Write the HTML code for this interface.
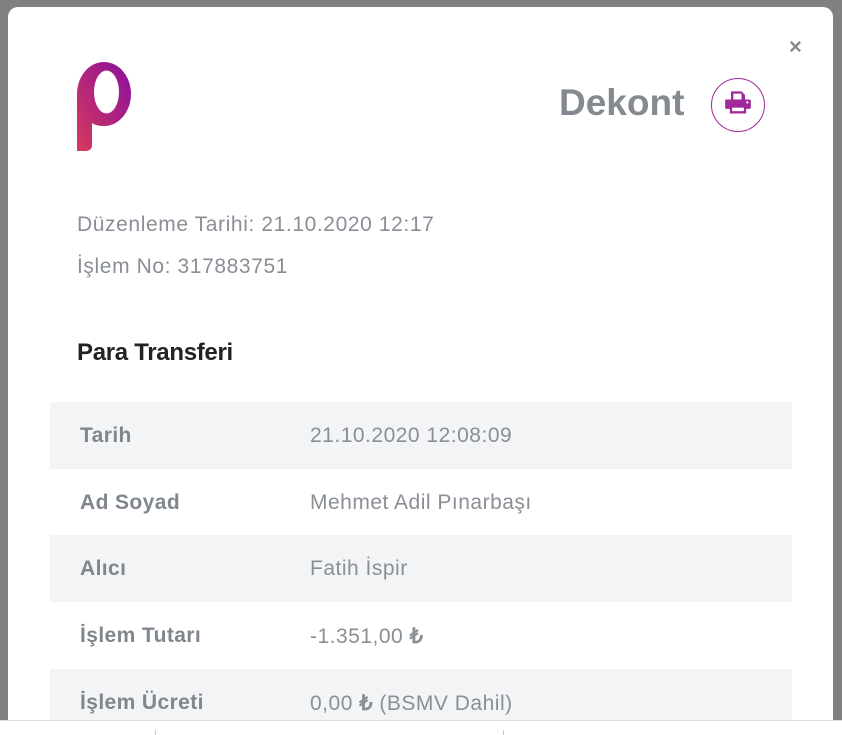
<!DOCTYPE html>
<html><head><meta charset="utf-8"><style>
html,body{margin:0;width:842px;height:735px;overflow:hidden}
body{background:#808080;position:relative;font-family:"Liberation Sans",sans-serif}
.modal{position:absolute;left:8px;top:7px;width:825px;height:728px;background:#fff;border-radius:10px 10px 0 0}
.bottom{position:absolute;left:0;top:720px;width:842px;height:15px;background:#fff;border-top:1px solid #ddd}
.tick{position:absolute;top:730px;width:1px;height:5px;background:#ccc}
.t{position:absolute;color:#8a8f96}
.row{position:absolute;left:50px;width:742px;height:67px}
.row.g{background:#f3f4f6}
.lab{position:absolute;left:30px;top:22px;font-size:21px;font-weight:bold;color:#80868e;letter-spacing:0.4px}
.val{position:absolute;left:260px;top:22px;font-size:21px;color:#8a8f96;letter-spacing:0.5px}
</style></head><body>
<div class="modal"></div>
<svg style="position:absolute;left:76px;top:61px" width="58" height="92" viewBox="0 0 58 92">
<defs><linearGradient id="gr" x1="0" y1="1" x2="1" y2="0"><stop offset="0" stop-color="#d63a5c"/><stop offset="1" stop-color="#8a0f9e"/></linearGradient></defs>
<path d="M1 33 A27 32 0 1 1 28 65 Q20 65 16 62 L16 84 Q16 90 9 90 L1 90 Z M18 31 A12.5 21.5 0 1 0 43 31 A12.5 21.5 0 1 0 18 31 Z" fill="url(#gr)" fill-rule="evenodd"/>
</svg>
<div class="t" style="left:559px;top:82px;font-size:37px;font-weight:bold;color:#858a91">Dekont</div>
<div style="position:absolute;left:711px;top:78px;width:52px;height:52px;border:1.5px solid #a0289a;border-radius:50%"></div>
<svg style="position:absolute;left:724px;top:89px" width="28" height="28" viewBox="0 0 24 24">
<path d="M6 2h9l3 3v4H6z" fill="#a0289a"/><rect x="8" y="4" width="7" height="5" fill="#fff"/>
<rect x="1" y="9" width="22" height="8" rx="1" fill="#a0289a"/>
<rect x="5" y="14" width="14" height="7" fill="#a0289a"/><rect x="7" y="16" width="10" height="3" fill="#fff"/>
<circle cx="20" cy="11.5" r="1" fill="#fff"/>
</svg>
<div class="t" style="left:789px;top:34px;font-size:22px;font-weight:bold;color:#8a8a8a">×</div>
<div class="t" style="left:77px;top:213px;font-size:21px;letter-spacing:0.6px">Düzenleme Tarihi: 21.10.2020 12:17</div>
<div class="t" style="left:77px;top:255px;font-size:21px;letter-spacing:0.6px">İşlem No: 317883751</div>
<div class="t" style="left:77px;top:339px;font-size:24px;font-weight:bold;color:#222;letter-spacing:-0.3px">Para Transferi</div>
<div class="row g" style="top:402px"><div class="lab">Tarih</div><div class="val">21.10.2020 12:08:09</div></div>
<div class="row" style="top:469px"><div class="lab">Ad Soyad</div><div class="val">Mehmet Adil Pınarbaşı</div></div>
<div class="row g" style="top:535px"><div class="lab">Alıcı</div><div class="val">Fatih İspir</div></div>
<div class="row" style="top:602px"><div class="lab">İşlem Tutarı</div><div class="val">-1.351,00 <b>₺</b></div></div>
<div class="row g" style="top:669px"><div class="lab">İşlem Ücreti</div><div class="val">0,00 <b>₺</b> (BSMV Dahil)</div></div>
<div class="bottom"></div>
<div class="tick" style="left:155px"></div><div class="tick" style="left:503px"></div>
</body></html>
